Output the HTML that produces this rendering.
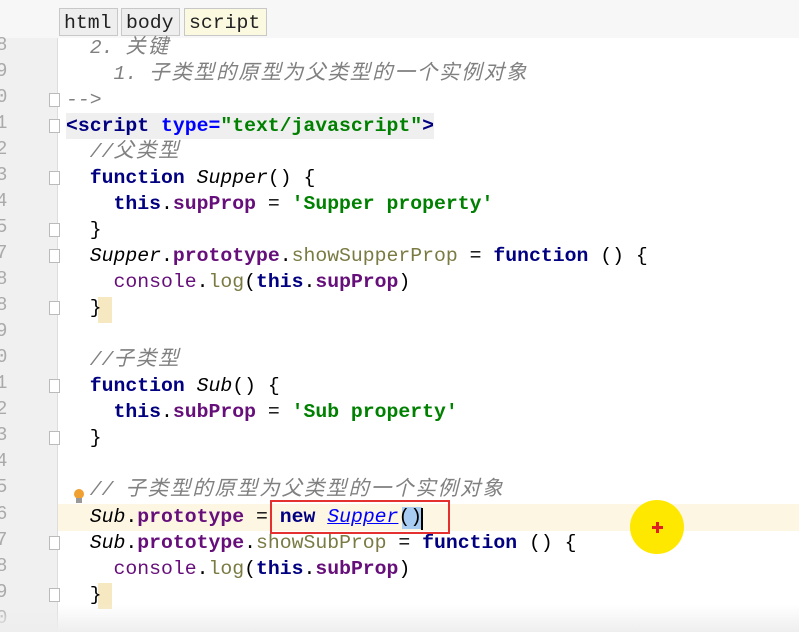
<!DOCTYPE html>
<html><head><meta charset="utf-8"><style>
body{margin:0;width:799px;height:632px;overflow:hidden;background:#fff;position:relative;font-family:"Liberation Mono","Noto Sans CJK SC",monospace;}
.gut{position:absolute;left:0;top:38px;width:57px;height:594px;background:#f0f0f0;border-right:1px solid #ddd;}
.hdr{position:absolute;left:0;top:0;width:799px;height:38px;background:#f7f7f7;}
.tab{position:absolute;top:8px;height:28px;border:1px solid #c8c8c8;background:#eeeeee;font-size:19.8px;line-height:28px;padding:0 4px;color:#222;box-sizing:border-box;}
.ln{position:absolute;left:-4px;font-size:19px;color:#aaa;}
.l{position:absolute;left:66px;height:26px;line-height:26px;font-size:19.8px;white-space:pre;color:#000;top:1px}
.k{color:#000080;font-weight:bold}
.s{color:#008000;font-weight:bold}
.c{color:#808080;font-style:italic}
.z{letter-spacing:1.8px;font-size:20.5px}
.p{color:#660e7a;font-weight:bold}
.pn{color:#660e7a}
.m{color:#7a7a43}
.i{font-style:italic}
.fold{position:absolute;left:49px;width:11px;height:14px;border:1px solid #bbb;background:#fff;box-sizing:border-box;}
</style></head><body>
<div class="hdr"></div>
<div class="tab" style="left:59px;width:59px">html</div>
<div class="tab" style="left:121px;width:59px">body</div>
<div class="tab" style="left:184px;width:83px;background:#fbf9df">script</div>
<div class="gut"></div>
<div style="position:absolute;left:58px;top:504px;width:741px;height:27px;background:#fdf6e3"></div>
<div style="position:absolute;left:66px;top:113px;width:368px;height:26px;background:#efefef"></div>
<div style="position:absolute;left:98px;top:297px;width:14px;height:26px;background:#f6e9c2"></div>
<div style="position:absolute;left:98px;top:583px;width:14px;height:26px;background:#f6e9c2"></div>
<div style="position:absolute;left:402px;top:507px;width:20px;height:22px;background:#a9cdf2"></div>
<div style="position:absolute;left:421px;top:508px;width:2px;height:22px;background:#000"></div>
<div class="fold" style="top:93px"></div><div class="fold" style="top:119px"></div>
<div class="fold" style="top:171px"></div><div class="fold" style="top:223px"></div><div class="fold" style="top:249px"></div><div class="fold" style="top:301px"></div>
<div class="fold" style="top:379px"></div><div class="fold" style="top:431px"></div>
<div class="fold" style="top:536px"></div><div class="fold" style="top:588px"></div>
<div class="ln" style="top:34px">8</div><div class="ln" style="top:60px">9</div><div class="ln" style="top:86px">0</div><div class="ln" style="top:112px">1</div><div class="ln" style="top:138px">2</div><div class="ln" style="top:164px">3</div><div class="ln" style="top:190px">4</div><div class="ln" style="top:216px">5</div><div class="ln" style="top:242px">7</div><div class="ln" style="top:268px">8</div><div class="ln" style="top:294px">8</div><div class="ln" style="top:320px">9</div><div class="ln" style="top:346px">0</div><div class="ln" style="top:372px">1</div><div class="ln" style="top:398px">2</div><div class="ln" style="top:424px">3</div><div class="ln" style="top:450px">4</div><div class="ln" style="top:476px">5</div><div class="ln" style="top:503px">6</div><div class="ln" style="top:529px">7</div><div class="ln" style="top:555px">8</div><div class="ln" style="top:581px">9</div><div class="ln" style="top:607px">0</div>
<div class="l c" style="top:35px">  2. <span class="z">关键</span></div>
<div class="l c" style="top:61px">    1. <span class="z">子类型的原型为父类型的一个实例对象</span></div>
<div class="l c" style="top:87px">--&gt;</div>
<div class="l" style="top:113px"><span class="k">&lt;script </span><span style="color:#0000ff;font-weight:bold">type=</span><span class="s">"text/javascript"</span><span class="k">&gt;</span></div>
<div class="l c" style="top:139px">  //<span class="z">父类型</span></div>
<div class="l" style="top:165px">  <span class="k">function </span><span class="i">Supper</span>() {</div>
<div class="l" style="top:191px">    <span class="k">this</span>.<span class="p">supProp</span> = <span class="s">'Supper property'</span></div>
<div class="l" style="top:217px">  }</div>
<div class="l" style="top:243px">  <span class="i">Supper</span>.<span class="p">prototype</span>.<span class="m">showSupperProp</span> = <span class="k">function</span> () {</div>
<div class="l" style="top:269px">    <span class="pn">console</span>.<span class="m">log</span>(<span class="k">this</span>.<span class="p">supProp</span>)</div>
<div class="l" style="top:295px">  }</div>
<div class="l c" style="top:347px">  //<span class="z">子类型</span></div>
<div class="l" style="top:373px">  <span class="k">function </span><span class="i">Sub</span>() {</div>
<div class="l" style="top:399px">    <span class="k">this</span>.<span class="p">subProp</span> = <span class="s">'Sub property'</span></div>
<div class="l" style="top:425px">  }</div>
<div class="l c" style="top:477px">  // <span class="z">子类型的原型为父类型的一个实例对象</span></div>
<div class="l" style="top:504px">  <span class="i">Sub</span>.<span class="p">prototype</span> = <span class="k">new </span><span class="i" style="color:#0000ff;text-decoration:underline">Supper</span>()</div>
<div class="l" style="top:530px">  <span class="i">Sub</span>.<span class="p">prototype</span>.<span class="m">showSubProp</span> = <span class="k">function</span> () {</div>
<div class="l" style="top:556px">    <span class="pn">console</span>.<span class="m">log</span>(<span class="k">this</span>.<span class="p">subProp</span>)</div>
<div class="l" style="top:582px">  }</div>
<div style="position:absolute;left:74px;top:489px;width:10px;height:10px;border-radius:50%;background:#f0a030"></div>
<div style="position:absolute;left:76px;top:498px;width:6px;height:5px;background:#999"></div>
<div style="position:absolute;left:270px;top:500px;width:180px;height:34px;border:2px solid #e53030;box-sizing:border-box"></div>
<div style="position:absolute;left:630px;top:500px;width:54px;height:54px;border-radius:50%;background:#ffe800"></div>
<div style="position:absolute;left:652px;top:526px;width:11px;height:2.5px;background:#e02020"></div>
<div style="position:absolute;left:656px;top:522px;width:2.5px;height:11px;background:#e02020"></div>
<div style="position:absolute;left:0;top:605px;width:799px;height:27px;background:linear-gradient(#fff0,#eeeeee)"></div>
</body></html>
